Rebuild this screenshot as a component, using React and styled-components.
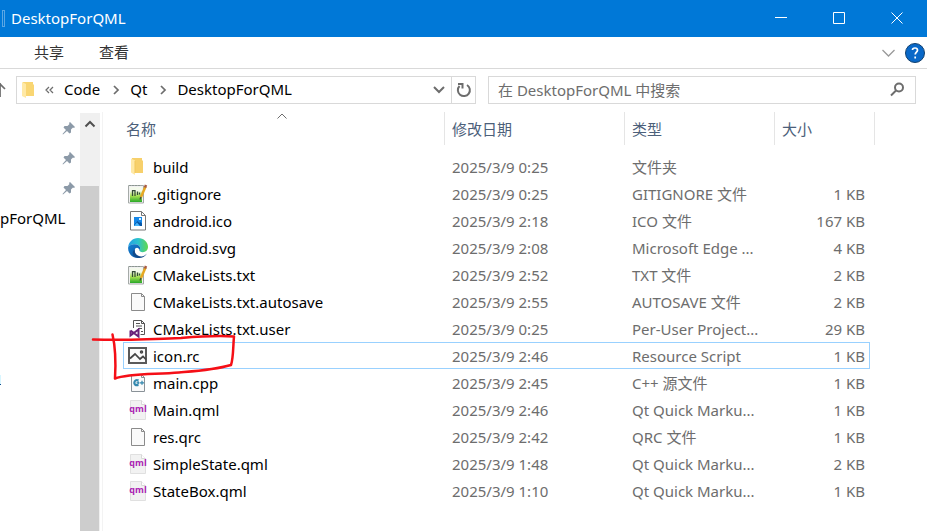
import React from "react";
import styled, { createGlobalStyle } from "styled-components";

const GlobalStyle = createGlobalStyle`
  *, *::before, *::after { box-sizing: border-box; }
  body { margin: 0; background: #fff; }
  body, button, input {
    font-family: "Noto Sans", "Noto Sans CJK SC", sans-serif;
    font-size: 15px;
    line-height: 20px;
  }
  button { border: 0; padding: 0; background: none; color: inherit; cursor: pointer; }
  svg { display: block; flex: none; }
`;

const Window = styled.div`
  position: relative;
  display: flex;
  flex-direction: column;
  min-height: 100vh;
  overflow: hidden;
  background: #fff;
  color: #000;
`;

const TitleBar = styled.header`
  display: flex;
  align-items: center;
  height: 37px;
  background: #0078d7;
  color: #fff;
`;

const ToolbarMark = styled.span`
  width: 3px;
  height: 17px;
  margin: 0 6px 0 2px;
  border: 1px solid #5ba7e4;
`;

const WindowTitle = styled.h1`
  flex: 1;
  margin: 0;
  padding-bottom: 2px;
  font-size: 15px;
  font-weight: 400;
`;

const WindowButton = styled.button`
  display: grid;
  place-items: center;
  width: 58px;
  height: 37px;
`;

const Ribbon = styled.nav`
  display: flex;
  align-items: center;
  height: 32px;
  padding-left: 34px;
  border-bottom: 1px solid #d9d9d9;
`;

const Tab = styled.button`
  margin-right: 35px;
  padding-bottom: 2px;
  color: #333;
`;

const RibbonTools = styled.div`
  display: flex;
  align-items: center;
  gap: 10px;
  margin-left: auto;
  padding-right: 2px;
`;

const NavigationBar = styled.div`
  display: grid;
  grid-template-columns: 16px minmax(0, 460fr) 12px minmax(0, 428fr);
  align-items: center;
  height: 43px;
  padding: 0 11px 2px 0;
`;

const UpButton = styled.button`
  width: 16px;
  height: 28px;
`;

const AddressBar = styled.div`
  display: flex;
  align-items: center;
  grid-column: 2;
  height: 28px;
  border: 1px solid #d9d9d9;
`;

const Crumbs = styled.div`
  display: flex;
  align-items: center;
  flex: 1;
  min-width: 0;
  gap: 10px;
  padding-left: 5px;
`;

const CrumbButton = styled.button`
  padding-bottom: 2px;
`;

const FieldButton = styled.button`
  display: grid;
  place-items: center;
  width: 24px;
  height: 26px;
  border-left: ${(p) => (p.$divided ? "1px solid #d9d9d9" : "0")};
`;

const SearchBox = styled.label`
  display: flex;
  align-items: center;
  grid-column: 4;
  height: 28px;
  padding: 0 10px 0 9px;
  border: 1px solid #d9d9d9;
`;

const SearchInput = styled.input`
  flex: 1;
  min-width: 0;
  padding: 0;
  border: 0;
  outline: 0;
  background: none;
  &::placeholder { color: #6d6d6d; opacity: 1; }
`;

const Content = styled.div`
  display: flex;
  flex: 1;
`;

const Sidebar = styled.aside`
  width: 80px;
  padding-top: 1px;
  overflow: hidden;
`;

const PinnedItem = styled.div`
  display: flex;
  align-items: center;
  justify-content: flex-end;
  height: 30px;
  padding-right: 4px;
`;

const FolderLink = styled.a`
  display: block;
  height: 30px;
  line-height: 30px;
  color: #000;
  text-decoration: none;
`;

const LinkEdge = styled.span`
  display: block;
  width: 1px;
  height: 10px;
  margin-top: 142px;
  border-bottom: 1px solid #12508f;
  background: #d8f6ff;
`;

const ScrollBar = styled.div`
  display: flex;
  flex-direction: column;
  width: 20px;
  margin-top: 1px;
  background: #f0f0f0;
`;

const ScrollUp = styled.button`
  display: grid;
  place-items: center;
  height: 21px;
`;

const ScrollThumb = styled.div`
  flex: 1;
  width: 19px;
  margin-top: 52px;
  background: #cdcdcd;
`;

const FilePane = styled.main`
  flex: 1;
  min-width: 0;
  margin-left: 2px;
  padding: 0 52px 24px 20px;
  border-left: 1px solid #f3f3f3;
`;

const FileTable = styled.table`
  display: block;
`;

const TableHead = styled.thead`
  display: block;
  padding-bottom: 8px;
`;

const TableBody = styled.tbody`
  display: block;
  padding-right: 5px;
`;

const HeadRow = styled.tr`
  display: grid;
  grid-template-columns: minmax(0, 1fr) 180px 150px 100px;
`;

const HeadCell = styled.th`
  position: relative;
  height: 33px;
  padding: 7px 0 0 ${(p) => (p.$first ? "3px" : "7px")};
  border-right: 1px solid #e5e5e5;
  color: #4c607a;
  font-weight: 400;
  text-align: left;
`;

const SortMark = styled.span`
  position: absolute;
  top: 1px;
  left: 50%;
  margin-left: -7px;
`;

const FileRow = styled.tr`
  display: grid;
  grid-template-columns: minmax(0, 1fr) 180px 150px 95px;
  align-items: center;
  height: 27px;
  outline: ${(p) => (p.$selected ? "1px solid #99d1ff" : "0")};
  outline-offset: ${(p) => (p.$selected ? "-1px" : "0")};
`;

const NameCell = styled.td`
  display: flex;
  align-items: center;
  gap: 5px;
  padding: 0 0 0 5px;
  white-space: nowrap;
`;

const DetailCell = styled.td`
  padding: 0 12px 0 7px;
  overflow: hidden;
  color: #6d6d6d;
  text-align: left;
  text-overflow: ellipsis;
  white-space: nowrap;
`;

const SizeCell = styled(DetailCell)`
  padding: 0 5px;
  text-align: right;
`;

const InkMark = styled.svg`
  position: absolute;
  top: 328px;
  left: 88px;
  pointer-events: none;
`;

const Chevron = ({ d, w, h, color = "#6d6d6d", stroke = 1 }) => (
  <svg width={w} height={h} viewBox={`0 0 ${w} ${h}`} fill="none" stroke={color} strokeWidth={stroke}>
    <path d={d} />
  </svg>
);

const FolderIcon = () => (
  <svg width="20" height="20" viewBox="0 0 20 20">
    <path d="M4 1h10v2l1 1v12H4z" fill="#f7d06b" />
    <path d="M3 1.500l4 2V18l-4-2.500z" fill="#ffe9a6" />
    <path d="M7 4v12" stroke="#f1c75d" />
  </svg>
);

const PageIcon = ({ children, stroke = "#8b8b8b" }) => (
  <svg width="20" height="20" viewBox="0 0 20 20">
    <path d="M3.500 1.500h10l3 3v14h-13z" fill="#fafafa" stroke={stroke} />
    <path d="M13.500 1.500v3h3" fill="none" stroke={stroke} />
    {children}
  </svg>
);

const NotepadIcon = () => (
  <svg width="20" height="20" viewBox="0 0 20 20">
    <defs>
      <linearGradient id="pad" x2="0" y2="1">
        <stop offset=".25" stopColor="#f4faec" />
        <stop offset=".6" stopColor="#a5e050" />
        <stop offset="1" stopColor="#28a828" />
      </linearGradient>
    </defs>
    <path d="M.5 1.500h15v17.500H.5z" fill="#f1f1f1" stroke="#a5aaa8" />
    <path d="M2 3h12v15H2z" fill="url(#pad)" />
    <path d="M2 1v1M5 1v1M8 1v1M11 1v1" stroke="#71827b" />
    <path d="M4.500 12V6.500h2.500V12M9.500 7.500V11M11.500 8.500v2" fill="none" stroke="#344b36" strokeWidth="1.250" />
    <path d="M17.500 2.500L13 13" stroke="#e7a822" strokeWidth="2.500" />
    <path d="M17 3.500l1-2.500" stroke="#a85c45" strokeWidth="2.500" />
    <path d="M13 13l-1 2.500" stroke="#4d4a38" strokeWidth="1.500" />
  </svg>
);

const ImageFileIcon = () => (
  <svg width="20" height="20" viewBox="0 0 20 20">
    <path d="M2.500.5h11l4 4v14.500h-15z" fill="#fff" stroke="#777" />
    <path d="M13.500.5v4h4" fill="none" stroke="#777" />
    <path d="M6 6h8v9H6z" fill="#1687e8" />
    <path d="M6 14l3.500-4 2 2L12.500 11l1.500 1.500V15H6z" fill="#0756a6" />
    <path d="M6 15l3-3.500 3 3.500z" fill="#49b6fb" />
    <path d="M11 7h2v2h-2z" fill="#d6f1ff" />
  </svg>
);

const EdgeIcon = () => (
  <svg width="20" height="20" viewBox="0 0 24 24">
    <defs>
      <linearGradient id="edgeTop" x1="0" y1=".4" x2="1" y2=".4">
        <stop stopColor="#249ee3" />
        <stop offset=".5" stopColor="#2bc2ce" />
        <stop offset="1" stopColor="#62d94b" />
      </linearGradient>
      <linearGradient id="edgeLow" x2=".8" y2="1">
        <stop stopColor="#1480d3" />
        <stop offset="1" stopColor="#0c57a3" />
      </linearGradient>
    </defs>
    <path d="M.2 11C.8 4.800 5.600 0 12 0c7 0 12 5 12 10.600 0 4-2.800 6.400-6.300 6.400-2.600 0-4.100-.9-4.100-1.900 0-.8 1-1.200 1-3 0-2.400-2.400-4.700-6-4.700C4.500 7.400 1.200 8.700.2 11z" fill="url(#edgeTop)" />
    <path d="M.1 12C.1 9 4 7.400 8.600 7.400c3.600 0 6 2.300 6 4.700 0 1.800-1 2.200-1 3 0-4-4.800-4.500-5.600-.7-.8 4 2.500 8.600 6.800 9.200C7 25.400.1 20 .1 12z" fill="url(#edgeLow)" />
    <path d="M8.300 13.500c-1.300 5 3.200 8.600 7.700 8.600 2.500 0 5-1.200 6.500-3.500-2.500 5.300-9.500 6.600-14 4C4.500 20.500 5 15.500 8.300 13.500z" fill="#114a8b" />
  </svg>
);

const ProjectUserIcon = () => (
  <svg width="20" height="20" viewBox="0 0 20 20">
    <path d="M5.500 9V1.500h8l3 3v11h-4" fill="#fff" stroke="#555" />
    <path d="M13.500 1.500v3h3M8 4.500h4M8 7h6M10 9.500h4M13 12.500h2" fill="none" stroke="#555" />
    <path d="M2.500 11.500v5l8-6v7l-8-6" fill="#fff" stroke="#68217a" strokeWidth="2" />
  </svg>
);

const ResourceIcon = () => (
  <svg width="20" height="20" viewBox="0 0 20 20" fill="none" stroke="#444" strokeWidth="2">
    <path d="M1 2h17v15H1z" fill="#fafafa" stroke="#5a5a5a" />
    <path d="M2 12.500l5-4.500 5 5 3-2.500 3 3" strokeWidth="1.750" />
    <circle cx="13.500" cy="6" r=".75" />
  </svg>
);

const CppIcon = () => (
  <PageIcon stroke="#8a9298">
    <path d="M10.500 7.500C6 5 4 13.500 10.500 12" fill="none" stroke="#3488ae" strokeWidth="2.250" />
    <path d="M8.500 9.750h3M12 9.750h4M10.200 8.250v3M14 7.750v4" stroke="#3488ae" strokeWidth="1.250" />
  </PageIcon>
);

const QmlLetters = styled.text`
  fill: #ab22b3;
  font: 700 9px "Open Sans", sans-serif;
`;

const QmlIcon = () => (
  <svg width="20" height="20" viewBox="0 0 20 20" overflow="visible">
    <path d="M2.500.5h11l4 4V19.500h-15z" fill="#f2f2f2" stroke="#e0e0e0" />
    <path d="M13.500.5v4h4" fill="#fff" stroke="#d8d8d8" />
    <QmlLetters x="10" y="12" textAnchor="middle">qml</QmlLetters>
  </svg>
);

const PinIcon = () => (
  <svg width="14" height="14" viewBox="0 0 14 14">
    <path d="M8 1l5 5-1 1-1-.500-2 2v3l-1.500 1-2.500-2.500L1 13.500l-.500-.500L4 9 1.500 6.500l1-1.500h3l2-2L7 2z" fill="#8c9aa8" />
  </svg>
);

const icons = {
  folder: FolderIcon, pad: NotepadIcon, image: ImageFileIcon, edge: EdgeIcon,
  page: PageIcon, user: ProjectUserIcon, resource: ResourceIcon, cpp: CppIcon, qml: QmlIcon,
};

const files = [
  ["folder", "build", "2025/3/9 0:25", "文件夹", ""],
  ["pad", ".gitignore", "2025/3/9 0:25", "GITIGNORE 文件", "1 KB"],
  ["image", "android.ico", "2025/3/9 2:18", "ICO 文件", "167 KB"],
  ["edge", "android.svg", "2025/3/9 2:08", "Microsoft Edge ...", "4 KB"],
  ["pad", "CMakeLists.txt", "2025/3/9 2:52", "TXT 文件", "2 KB"],
  ["page", "CMakeLists.txt.autosave", "2025/3/9 2:55", "AUTOSAVE 文件", "2 KB"],
  ["user", "CMakeLists.txt.user", "2025/3/9 0:25", "Per-User Project...", "29 KB"],
  ["resource", "icon.rc", "2025/3/9 2:46", "Resource Script", "1 KB"],
  ["cpp", "main.cpp", "2025/3/9 2:45", "C++ 源文件", "1 KB"],
  ["qml", "Main.qml", "2025/3/9 2:46", "Qt Quick Marku...", "1 KB"],
  ["page", "res.qrc", "2025/3/9 2:42", "QRC 文件", "1 KB"],
  ["qml", "SimpleState.qml", "2025/3/9 1:48", "Qt Quick Marku...", "2 KB"],
  ["qml", "StateBox.qml", "2025/3/9 1:10", "Qt Quick Marku...", "1 KB"],
];

const CrumbArrow = () => <Chevron w={10} h={10} d="M4 1l4 4-4 4" stroke={1.75} />;

export default function App() {
  return (
    <Window>
      <GlobalStyle />
      <TitleBar>
        <ToolbarMark />
        <WindowTitle>DesktopForQML</WindowTitle>
        <WindowButton aria-label="最小化"><Chevron w={14} h={13} d="M0 5.500h12" color="#fff" /></WindowButton>
        <WindowButton aria-label="最大化"><Chevron w={14} h={13} d="M.5.5h11v11H.5z" color="#fff" /></WindowButton>
        <WindowButton aria-label="关闭"><Chevron w={14} h={13} d="M.5.5l11 11M11.500.5l-11 11" color="#fff" /></WindowButton>
      </TitleBar>
      <Ribbon>
        <Tab>共享</Tab>
        <Tab>查看</Tab>
        <RibbonTools>
          <button aria-label="展开功能区"><Chevron w={13} h={8} d="M.5 1l6 6 6-6" color="#999" stroke={1.25} /></button>
          <button aria-label="帮助">
            <svg width="20" height="20" viewBox="0 0 20 20">
              <circle cx="10" cy="10" r="9.500" fill="#0968c8" stroke="#12406e" />
              <path d="M7.500 7Q7.500 5 10 5t2.500 2.200c0 1.800-2.300 2-2.300 4.300M10.200 13.500v2" fill="none" stroke="#fff" strokeWidth="1.700" />
            </svg>
          </button>
        </RibbonTools>
      </Ribbon>
      <NavigationBar>
        <UpButton aria-label="向上"><Chevron w={6} h={16} d="M0 1v14M-5 7l5-5 5 5" stroke={1.75} /></UpButton>
        <AddressBar>
          <Crumbs>
            <svg width="12" height="18" viewBox="0 0 12 18">
              <path d="M1 1h10v2l1 1v11H1z" fill="#f9d673" />
              <path d="M0 1l4 2v14l-4-2z" fill="#ffe9a6" />
            </svg>
            <Chevron w={10} h={8} d="M5 1L2 4l3 3M9 1L6 4l3 3" stroke={1.25} />
            <CrumbButton>Code</CrumbButton>
            <CrumbArrow />
            <CrumbButton>Qt</CrumbButton>
            <CrumbArrow />
            <CrumbButton>DesktopForQML</CrumbButton>
          </Crumbs>
          <FieldButton aria-label="以前的位置"><Chevron w={12} h={8} d="M1 1l5 5 5-5" stroke={2} /></FieldButton>
          <FieldButton $divided aria-label="刷新">
            <svg width="16" height="16" viewBox="0 0 16 16" fill="none" stroke="#6d6d6d" strokeWidth="2">
              <path d="M11 3A6 6 0 1 1 3.500 4M2 2h4.500V6.500" />
            </svg>
          </FieldButton>
        </AddressBar>
        <SearchBox>
          <SearchInput placeholder="在 DesktopForQML 中搜索" aria-label="搜索" />
          <svg width="15" height="15" viewBox="0 0 15 15" fill="none" stroke="#6d6d6d" strokeWidth="2">
            <circle cx="9" cy="5.500" r="4" />
            <path d="M6 8.500L1 13.500" />
          </svg>
        </SearchBox>
      </NavigationBar>
      <Content>
        <Sidebar>
          <PinnedItem><PinIcon /></PinnedItem>
          <PinnedItem><PinIcon /></PinnedItem>
          <PinnedItem><PinIcon /></PinnedItem>
          <FolderLink href="#folder">pForQML</FolderLink>
          <LinkEdge />
        </Sidebar>
        <ScrollBar>
          <ScrollUp aria-label="向上滚动"><Chevron w={12} h={8} d="M1.500 6.500L6 2l4.500 4.500" color="#505050" stroke={2} /></ScrollUp>
          <ScrollThumb />
        </ScrollBar>
        <FilePane>
          <FileTable>
            <TableHead>
              <HeadRow>
                <HeadCell $first>名称<SortMark><Chevron w={10} h={6} d="M.5 5.500L5 1l4.500 4.500" /></SortMark></HeadCell>
                <HeadCell>修改日期</HeadCell>
                <HeadCell>类型</HeadCell>
                <HeadCell>大小</HeadCell>
              </HeadRow>
            </TableHead>
            <TableBody>
              {files.map(([icon, name, date, type, size]) => {
                const Icon = icons[icon];
                return (
                  <FileRow key={name} $selected={name === "icon.rc"}>
                    <NameCell><Icon />{name}</NameCell>
                    <DetailCell>{date}</DetailCell>
                    <DetailCell>{type}</DetailCell>
                    <SizeCell>{size}</SizeCell>
                  </FileRow>
                );
              })}
            </TableBody>
          </FileTable>
        </FilePane>
      </Content>
      <InkMark width="152" height="54" viewBox="88 328 152 54" fill="none" stroke="#f50f17" strokeWidth="2.500" strokeLinecap="round" strokeLinejoin="round">
        <path d="M93 339.500c38 1 58 0 88-1.500 18-1.500 38-2.500 53-1.500-1 10-.5 21-3 28.500-17 5-34 6-52 7.500-26 2-51 1-64 6 1-17 .5-31-2.500-44" />
      </InkMark>
    </Window>
  );
}
